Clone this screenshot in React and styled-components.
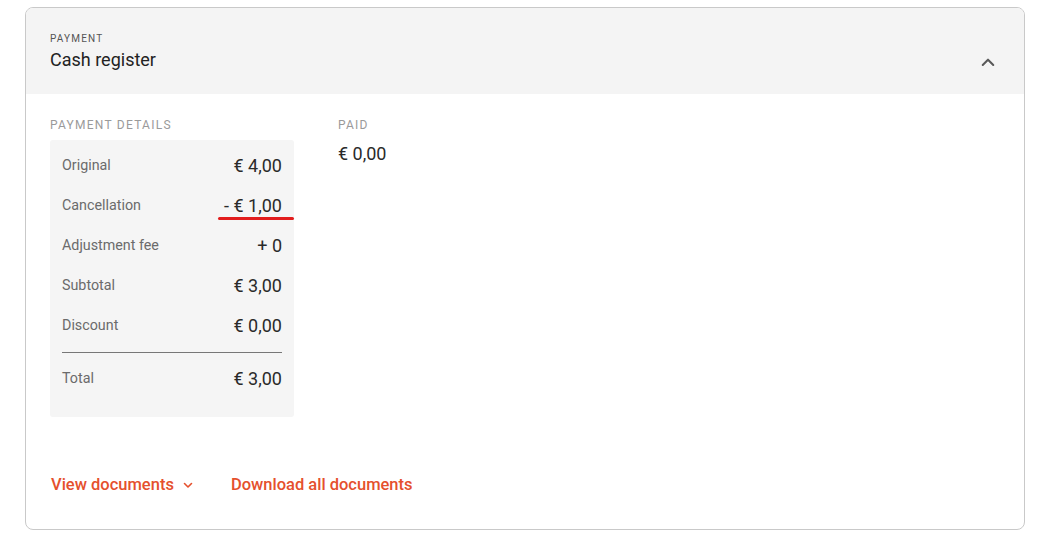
import styled, { createGlobalStyle } from "styled-components";

const GlobalStyle = createGlobalStyle`
  body {
    margin: 0;
    padding: 7px 16px 0 25px;
    font-family: Roboto, "Liberation Sans", Arial, sans-serif;
    background: #fff;
  }
`;

const Card = styled.div`
  width: 1000px;
  box-sizing: border-box;
  border: 1px solid #c9c9c9;
  border-radius: 8px;
  overflow: hidden;
`;

const Header = styled.div`
  background: #f4f4f4;
  display: flex;
  align-items: flex-end;
  justify-content: space-between;
  padding: 25px 29px 22px 24px;
`;

const Toggle = styled.div`
  display: flex;
  padding-bottom: 3px;
`;

const Overline = styled.div`
  font-size: 10px;
  line-height: 12px;
  letter-spacing: 1.2px;
  color: #555;
  text-transform: uppercase;
`;

const Title = styled.div`
  margin-top: 3px;
  font-size: 18px;
  line-height: 24px;
  color: #222;
`;

const Body = styled.div`
  padding: 23px 24px 34px 24px;
`;

const Columns = styled.div`
  display: flex;
  gap: 44px;
`;

const SectionLabel = styled.div`
  font-size: 12px;
  line-height: 17px;
  letter-spacing: 1.25px;
  color: #9a9a9a;
  text-transform: uppercase;
  margin-bottom: ${p => p.$gap ?? 6}px;
`;

const DetailsBox = styled.div`
  width: 244px;
  box-sizing: border-box;
  background: #f5f5f5;
  border-radius: 3px;
  padding: 5px 12px 19px 12px;
`;

const Row = styled.div`
  position: relative;
  display: flex;
  align-items: center;
  justify-content: space-between;
  height: 40px;
  margin-top: ${p => p.$top || 0}px;
`;

const Label = styled.span`
  font-size: 14.3px;
  color: #6b6b6b;
`;

const Value = styled.span`
  font-size: 18px;
  color: #2a2a2a;
`;

const Mark = styled.span`
  position: absolute;
  right: -12px;
  bottom: 5px;
  width: 76px;
  height: 3px;
  border-radius: 2px;
  background: #e21d1d;
`;

const Divider = styled.div`
  height: 1px;
  background: #777;
  margin-top: 7px;
`;

const PaidValue = styled.div`
  font-size: 18px;
  line-height: 24px;
  color: #2a2a2a;
  margin-top: 8px;
`;

const Links = styled.div`
  display: flex;
  align-items: center;
  gap: 37px;
  margin-top: 58px;
  padding-left: 1px;
`;

const LinkButton = styled.a`
  display: flex;
  align-items: center;
  gap: 8px;
  font-size: 16.5px;
  line-height: 20px;
  font-weight: 500;
  color: #e5502d;
  cursor: pointer;
`;

const Chevron = ({ up, color, size = 12, width = 1.6 }) => (
  <svg width={size} height={size} viewBox="0 0 12 12" fill="none">
    <path
      d={up ? "M1.5 8.5 L6 4 L10.5 8.5" : "M2.5 4.5 L6 8 L9.5 4.5"}
      stroke={color}
      strokeWidth={width}
      strokeLinecap="round"
      strokeLinejoin="round"
    />
  </svg>
);

const details = [
  { label: "Original", value: "€ 4,00" },
  { label: "Cancellation", value: "- € 1,00", mark: true },
  { label: "Adjustment fee", value: "+ 0" },
  { label: "Subtotal", value: "€ 3,00" },
  { label: "Discount", value: "€ 0,00" },
];

export default function App() {
  return (
    <>
      <GlobalStyle />
      <Card>
        <Header>
          <div>
            <Overline>Payment</Overline>
            <Title>Cash register</Title>
          </div>
          <Toggle>
            <Chevron up color="#5a5a5a" size={14} width={1.8} />
          </Toggle>
        </Header>
        <Body>
          <Columns>
            <div>
              <SectionLabel>Payment details</SectionLabel>
              <DetailsBox>
                {details.map(d => (
                  <Row key={d.label}>
                    <Label>{d.label}</Label>
                    <Value>{d.value}</Value>
                    {d.mark && <Mark />}
                  </Row>
                ))}
                <Divider />
                <Row $top={5}>
                  <Label>Total</Label>
                  <Value>€ 3,00</Value>
                </Row>
              </DetailsBox>
            </div>
            <div>
              <SectionLabel $gap={0}>Paid</SectionLabel>
              <PaidValue>€ 0,00</PaidValue>
            </div>
          </Columns>
          <Links>
            <LinkButton>
              View documents
              <Chevron color="#e5502d" size={12} />
            </LinkButton>
            <LinkButton>Download all documents</LinkButton>
          </Links>
        </Body>
      </Card>
    </>
  );
}
